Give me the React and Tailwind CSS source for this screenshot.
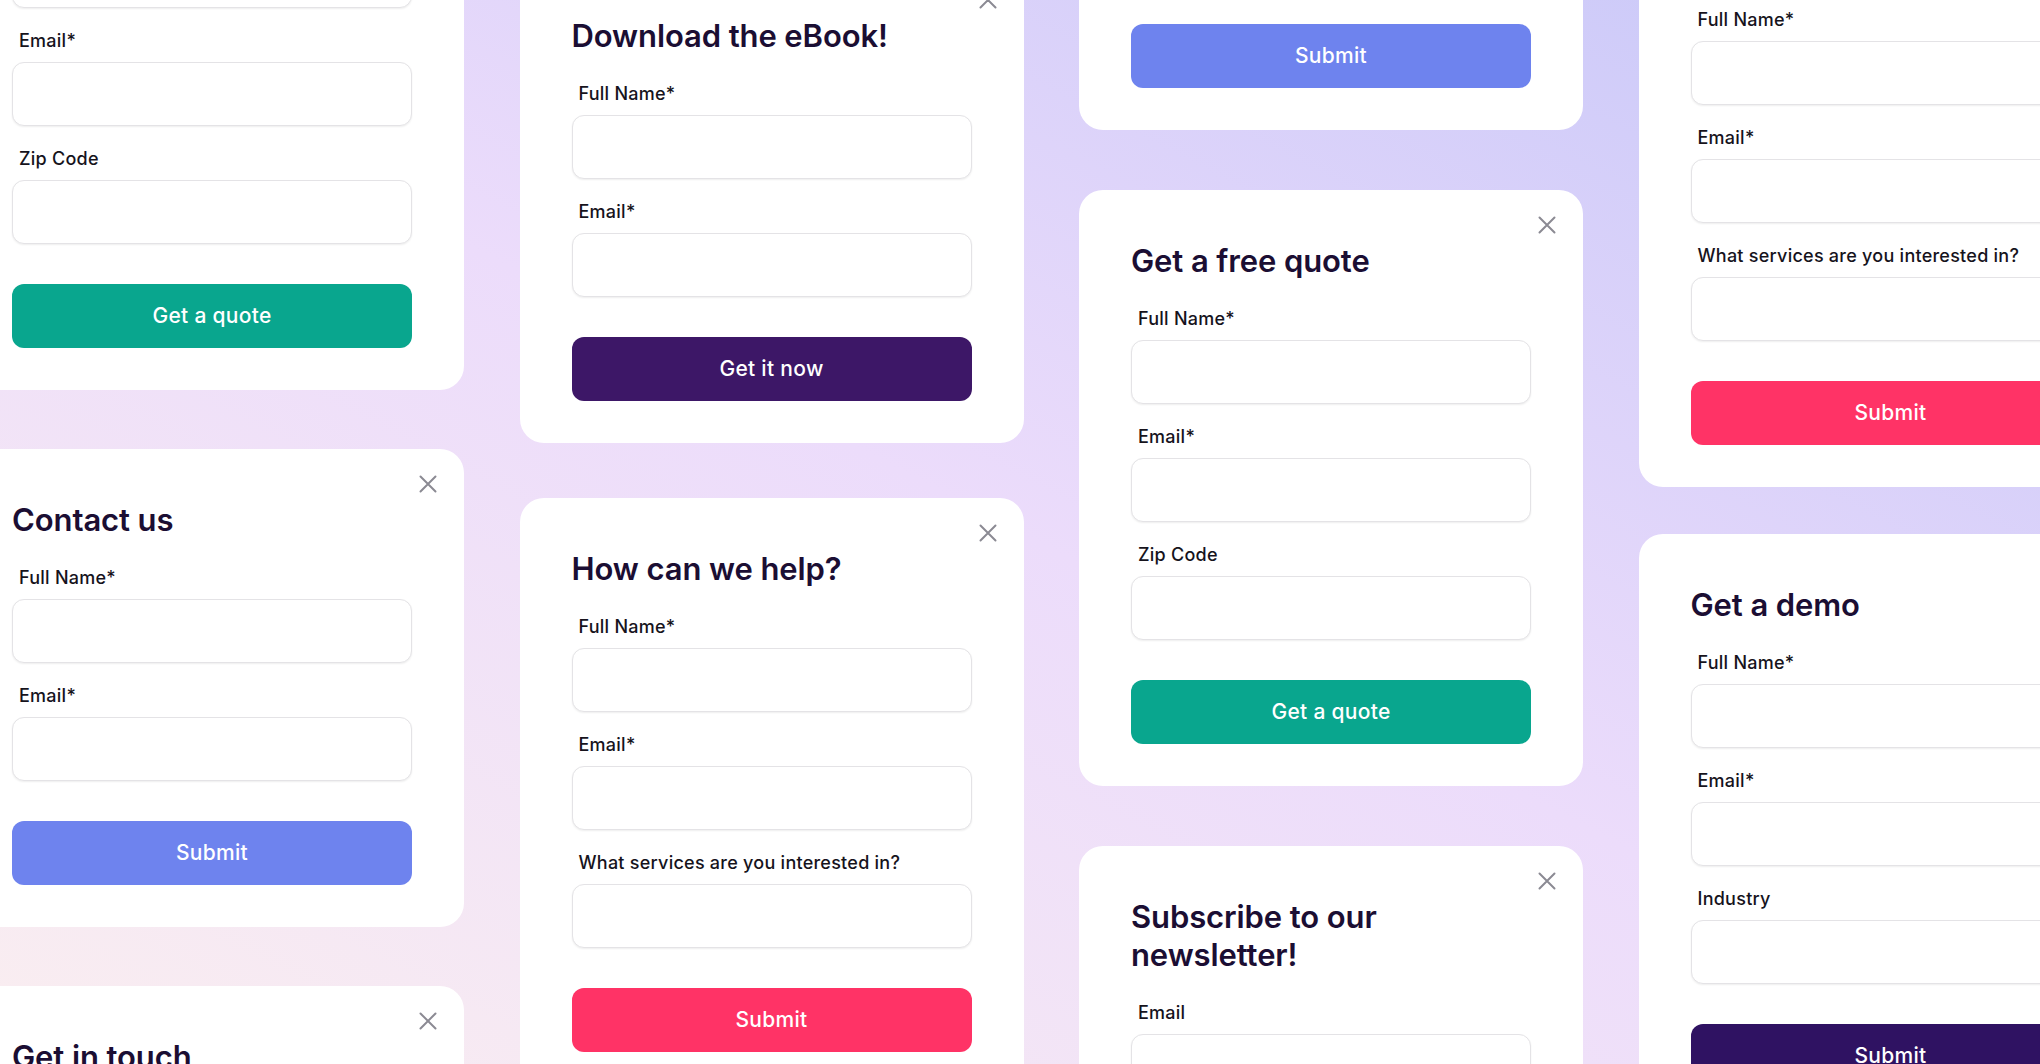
import React from "react";

const CloseIcon = () => (
  <svg width="18" height="18" viewBox="0 0 18 18" fill="none">
    <path d="M1.5 1.5L16.5 16.5M16.5 1.5L1.5 16.5" stroke="#8b8a93" strokeWidth="2" strokeLinecap="round" />
  </svg>
);

function FormCard({ title, fields, button, btnClass }) {
  return (
    <div className="relative bg-white rounded-[24px] px-[52px] pt-[52px] pb-[42px]">
      <button className="absolute top-[26px] right-[27px]">
        <CloseIcon />
      </button>
      <h2 className="text-[31px] leading-[38px] font-semibold text-[#1b0e33] tracking-[-0.1px]">
        {title}
      </h2>
      <div className="mt-[27px] flex flex-col gap-[21px]">
        {fields.map((f) => (
          <div key={f}>
            <label className="block pl-[7px] mb-[9px] text-[18px] leading-[24px] font-medium tracking-[0.25px] text-[#16131c]">
              {f}
            </label>
            <div className="h-[64px] rounded-[12px] border border-[#e4e3e6] bg-white shadow-[0_1px_2px_rgba(0,0,0,0.07)]" />
          </div>
        ))}
      </div>
      <button
        className={
          "mt-[40px] w-full h-[64px] rounded-[12px] text-white text-[21px] font-medium tracking-[0.3px] " + btnClass
        }
      >
        {button}
      </button>
    </div>
  );
}

const teal = "bg-[#09a68e]";
const purple = "bg-[#3d1767]";
const blue = "bg-[#6e83ee]";
const pink = "bg-[#ff3366]";
const deep = "bg-[#2f1262]";

const App = () => {
  return (
    <div className="w-full h-[1064px] overflow-hidden bg-linear-to-bl from-[#c7c7f8] via-[#ecdcfb] to-[#faeef0] font-['Inter','Noto_Sans',sans-serif]">
      <div className="flex items-start gap-[55.5px] ml-[-40px]">
        {/* columna 1 */}
        <div className="w-[504px] shrink-0 flex flex-col gap-[59px] mt-[-206px]">
          <FormCard title="Get a quote" fields={["Full Name*", "Email*", "Zip Code"]} button="Get a quote" btnClass={teal} />
          <FormCard title="Contact us" fields={["Full Name*", "Email*"]} button="Submit" btnClass={blue} />
          <FormCard title="Get in touch" fields={["Full Name*", "Email*"]} button="Submit" btnClass={teal} />
        </div>

        {/* columna 2 */}
        <div className="w-[504px] shrink-0 flex flex-col gap-[55px] mt-[-35px]">
          <FormCard title="Download the eBook!" fields={["Full Name*", "Email*"]} button="Get it now" btnClass={purple} />
          <FormCard
            title="How can we help?"
            fields={["Full Name*", "Email*", "What services are you interested in?"]}
            button="Submit"
            btnClass={pink}
          />
        </div>

        {/* columna 3 */}
        <div className="w-[504px] shrink-0 flex flex-col gap-[60px] mt-[-348px]">
          <FormCard title="Sign up" fields={["Full Name*", "Email*"]} button="Submit" btnClass={blue} />
          <FormCard title="Get a free quote" fields={["Full Name*", "Email*", "Zip Code"]} button="Get a quote" btnClass={teal} />
          <FormCard
            title={
              <>
                Subscribe to our
                <br />
                newsletter!
              </>
            }
            fields={["Email"]}
            button="Subscribe"
            btnClass={purple}
          />
        </div>

        {/* columna 4 */}
        <div className="w-[504px] shrink-0 flex flex-col gap-[47px] mt-[-109px]">
          <FormCard
            title="How can we help?"
            fields={["Full Name*", "Email*", "What services are you interested in?"]}
            button="Submit"
            btnClass={pink}
          />
          <FormCard title="Get a demo" fields={["Full Name*", "Email*", "Industry"]} button="Submit" btnClass={deep} />
        </div>
      </div>
    </div>
  );
};

export default App;
